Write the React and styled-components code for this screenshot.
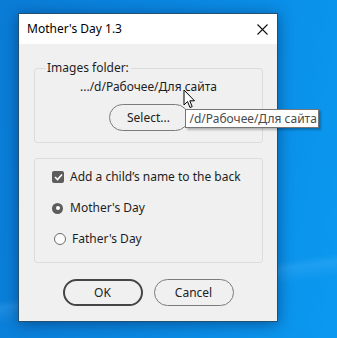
import React from 'react'
import styled, { createGlobalStyle } from 'styled-components'

const Global = createGlobalStyle`
  html, body {
    margin: 0;
    padding: 0;
  }
  body {
    font-family: "Noto Sans", "Liberation Sans", sans-serif;
    font-size: 12px;
    color: #1e1e1e;
  }
`

const Desktop = styled.div`
  width: 337px;
  height: 338px;
  box-sizing: border-box;
  padding: 13px 0 0 18px;
  overflow: hidden;
  background:
    linear-gradient(172deg, transparent 78%, rgba(120, 200, 255, 0.18) 80%, transparent 84%),
    linear-gradient(100deg, #0a7cd6 0%, #0a8ae4 55%, #0b99f0 100%);
`

const Window = styled.div`
  width: 260px;
  box-sizing: border-box;
  border: 1px solid #24506f;
  background: #f0f0f0;
  box-shadow: 0 2px 14px rgba(0, 20, 60, 0.45);
`

const TitleBar = styled.div`
  height: 30px;
  background: #fff;
  display: flex;
  align-items: center;
  justify-content: space-between;
  padding: 0 9px 0 8px;
`

const Title = styled.span`
  font-size: 12px;
  color: #000;
  line-height: 16px;
`

const Body = styled.div`
  padding: 16px 14px 15px 15px;
  display: flex;
  flex-direction: column;
`

const Group = styled.fieldset`
  margin: 0;
  margin-top: ${p => p.$top || 0}px;
  border: 1px solid #dcdcdc;
  border-radius: 3px;
  padding: ${p => p.$pad};
  display: flex;
  flex-direction: column;
  align-items: ${p => p.$center ? 'center' : 'flex-start'};
  min-width: 0;
`

const Legend = styled.legend`
  margin-left: 0;
  padding: 0 2px;
  line-height: 16px;
`

const PathText = styled.div`
  line-height: 16px;
  margin-top: 3px;
`

const SelectWrap = styled.div`
  position: relative;
  margin-top: 9px;
`

const Button = styled.button`
  width: 80px;
  height: 27px;
  box-sizing: border-box;
  border-radius: 14px;
  border: ${p => p.$primary ? '2px solid #454545' : '1px solid #7b7b7b'};
  background: #f0f0f0;
  font-family: "Noto Sans", "Liberation Sans", sans-serif;
  font-size: 12px;
  color: #222;
  padding: 0;
`

const Tooltip = styled.div`
  position: absolute;
  left: 76px;
  top: 5px;
  width: 134px;
  height: 19px;
  box-sizing: border-box;
  border: 1px solid #767676;
  background: #fff;
  box-shadow: 2px 2px 2px rgba(0, 0, 0, 0.25);
  padding: 0 0 0 4px;
  line-height: 17px;
  white-space: nowrap;
  color: #4a4a4a;
  z-index: 2;
`

const Cursor = styled.svg`
  position: absolute;
  left: 74px;
  top: -15px;
  z-index: 3;
`

const Option = styled.label`
  display: flex;
  align-items: center;
  gap: ${p => p.$gap}px;
  height: 16px;
  padding-left: ${p => p.$indent}px;
  line-height: 16px;
`

const Check = styled.span`
  width: 12px;
  height: 12px;
  border-radius: 2px;
  background: #5d5d5d;
  display: flex;
  align-items: center;
  justify-content: center;
`

const Radio = styled.span`
  width: ${p => p.$on ? 11 : 12}px;
  height: ${p => p.$on ? 11 : 12}px;
  box-sizing: border-box;
  border-radius: 50%;
  background: ${p => p.$on ? '#5d5d5d' : '#fbfbfb'};
  border: ${p => p.$on ? 'none' : '1px solid #6e6e6e'};
  display: flex;
  align-items: center;
  justify-content: center;
  &::after {
    content: '';
    display: ${p => p.$on ? 'block' : 'none'};
    width: 4px;
    height: 4px;
    border-radius: 50%;
    background: #fff;
  }
`

const Options = styled.div`
  display: flex;
  flex-direction: column;
  gap: 15px;
`

const Buttons = styled.div`
  display: flex;
  justify-content: center;
  gap: 11px;
  margin-top: 16px;
  padding-right: 1px;
`

export default function App() {
  return (
    <Desktop>
      <Global />
      <Window>
        <TitleBar>
          <Title>Mother's Day 1.3</Title>
          <svg width="11" height="11" viewBox="0 0 11 11">
            <path d="M0.5 0.5 L10.5 10.5 M10.5 0.5 L0.5 10.5" stroke="#111" strokeWidth="1.1" />
          </svg>
        </TitleBar>
        <Body>
          <Group $pad="0 10px 11px" $center>
            <Legend>Images folder:</Legend>
            <PathText>.../d/Рабочее/Для сайта</PathText>
            <SelectWrap>
              <Button>Select...</Button>
              <Cursor width="13" height="20" viewBox="0 0 13 20">
                <path d="M1 1 L1 16 L4.5 12.5 L7 18.5 L9.2 17.6 L6.8 11.8 L11.5 11.8 Z" fill="#fff" stroke="#000" strokeWidth="1" strokeLinejoin="miter" />
              </Cursor>
              <Tooltip>/d/Рабочее/Для сайта</Tooltip>
            </SelectWrap>
          </Group>
          <Group $top={15} $pad="10px 10px 15px 0">
            <Options>
              <Option $indent={17} $gap={6}>
                <Check>
                  <svg width="9" height="8" viewBox="0 0 9 8">
                    <path d="M1 4 L3.5 6.5 L8 1.5" fill="none" stroke="#fff" strokeWidth="1.6" />
                  </svg>
                </Check>
                Add a child’s name to the back
              </Option>
              <Option $indent={17} $gap={7}>
                <Radio $on />
                Mother's Day
              </Option>
              <Option $indent={19} $gap={6}>
                <Radio />
                Father's Day
              </Option>
            </Options>
          </Group>
          <Buttons>
            <Button $primary>OK</Button>
            <Button>Cancel</Button>
          </Buttons>
        </Body>
      </Window>
    </Desktop>
  )
}
